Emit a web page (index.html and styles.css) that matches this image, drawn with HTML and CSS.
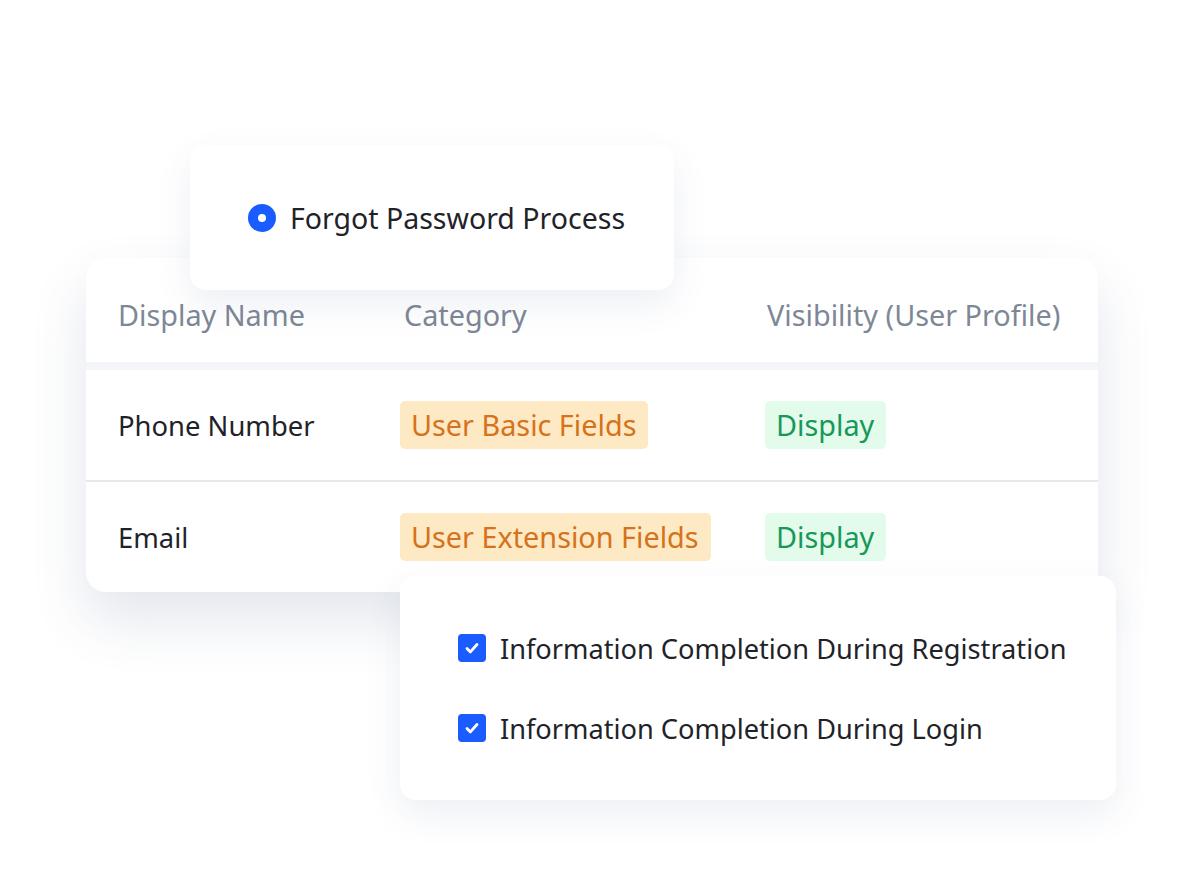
FILE: index.html
```html
<!DOCTYPE html>
<html lang="en">
<head>
    <meta charset="UTF-8">
    <meta name="viewport" content="width=device-width, initial-scale=1.0">
    <title>User Fields</title>
    <link rel="stylesheet" href="styles.css">
</head>
<body>
    <div class="stage">
        <div class="field-table">
            <div class="row head">
                <div class="cell">Display Name</div>
                <div class="cell">Category</div>
                <div class="cell">Visibility (User Profile)</div>
            </div>
            <div class="row">
                <div class="cell">Phone Number</div>
                <div class="cell"><span class="tag orange">User Basic Fields</span></div>
                <div class="cell"><span class="tag green">Display</span></div>
            </div>
            <div class="row">
                <div class="cell">Email</div>
                <div class="cell"><span class="tag orange">User Extension Fields</span></div>
                <div class="cell"><span class="tag green">Display</span></div>
            </div>
        </div>

        <!-- floating cards -->
        <div class="card process-card">
            <span class="radio"></span>
            <span>Forgot Password Process</span>
        </div>

        <div class="card options-card">
            <div class="option">
                <span class="check">
                    <svg viewBox="0 0 28 28" width="28" height="28"><path d="M9 14.5l3.4 3.4 6.6-7.4" fill="none" stroke="#fff" stroke-width="2.8" stroke-linecap="round" stroke-linejoin="round"/></svg>
                </span>
                <span>Information Completion During Registration</span>
            </div>
            <div class="option">
                <span class="check">
                    <svg viewBox="0 0 28 28" width="28" height="28"><path d="M9 14.5l3.4 3.4 6.6-7.4" fill="none" stroke="#fff" stroke-width="2.8" stroke-linecap="round" stroke-linejoin="round"/></svg>
                </span>
                <span>Information Completion During Login</span>
            </div>
        </div>
    </div>
</body>
</html>
```

FILE: styles.css
```css
body {
    margin: 0;
    background-color: #fff;
    font-family: "Noto Sans", "Liberation Sans", sans-serif;
    color: #1f2329;
}
.stage {
    position: relative;
    width: 1200px;
    height: 884px;
    padding: 258px 0 0 86px;
    box-sizing: border-box;
}
.field-table {
    width: 1012px;
    background-color: #fff;
    border-radius: 20px;
    box-shadow: 0 28px 56px rgba(60, 75, 130, 0.14);
    overflow: hidden;
}
.row {
    display: grid;
    grid-template-columns: 282px 365px 1fr;
    align-items: center;
    height: 110px;
    padding-left: 32px;
    font-size: 27.4px;
}
.row + .row {
    border-top: 2px solid #e6e8ed;
}
.row.head {
    height: 96px;
    padding-top: 8px;
    font-size: 28.8px;
    color: #7e8796;
    border-bottom: 8px solid #f4f5f8;
}
.row.head + .row {
    border-top: none;
}
.row.head .cell:nth-child(2) {
    padding-left: 4px;
}
.row.head .cell:nth-child(3) {
    padding-left: 2px;
}
.tag {
    display: inline-block;
    height: 48px;
    line-height: 48px;
    padding: 0 12px 0 11px;
    border-radius: 5px;
    font-size: 28.8px;
}
.tag.orange {
    background-color: #fde9c3;
    color: #d6721b;
}
.tag.green {
    background-color: #e3fbea;
    color: #17985a;
}
.card {
    position: absolute;
    background-color: #fff;
    border-radius: 16px;
    box-shadow: 0 14px 36px rgba(60, 75, 130, 0.09);
}
.process-card {
    left: 190px;
    top: 145px;
    width: 484px;
    height: 145px;
    display: flex;
    align-items: center;
    gap: 14px;
    padding-left: 58px;
    box-sizing: border-box;
    font-size: 28.5px;
}
.radio {
    width: 28px;
    height: 28px;
    border-radius: 50%;
    background-color: #1a5cff;
    position: relative;
    flex: none;
}
.radio::after {
    content: "";
    position: absolute;
    left: 10px;
    top: 10px;
    width: 8px;
    height: 8px;
    border-radius: 50%;
    background-color: #fff;
}
.options-card {
    left: 400px;
    top: 576px;
    width: 716px;
    height: 224px;
    display: flex;
    flex-direction: column;
    justify-content: center;
    gap: 52px;
    padding-left: 58px;
    box-sizing: border-box;
    font-size: 27.2px;
}
.option {
    display: flex;
    align-items: center;
    gap: 14px;
    height: 28px;
}
.check {
    width: 28px;
    height: 28px;
    border-radius: 4px;
    background-color: #1a5cff;
    flex: none;
}
.check svg {
    display: block;
}
```
